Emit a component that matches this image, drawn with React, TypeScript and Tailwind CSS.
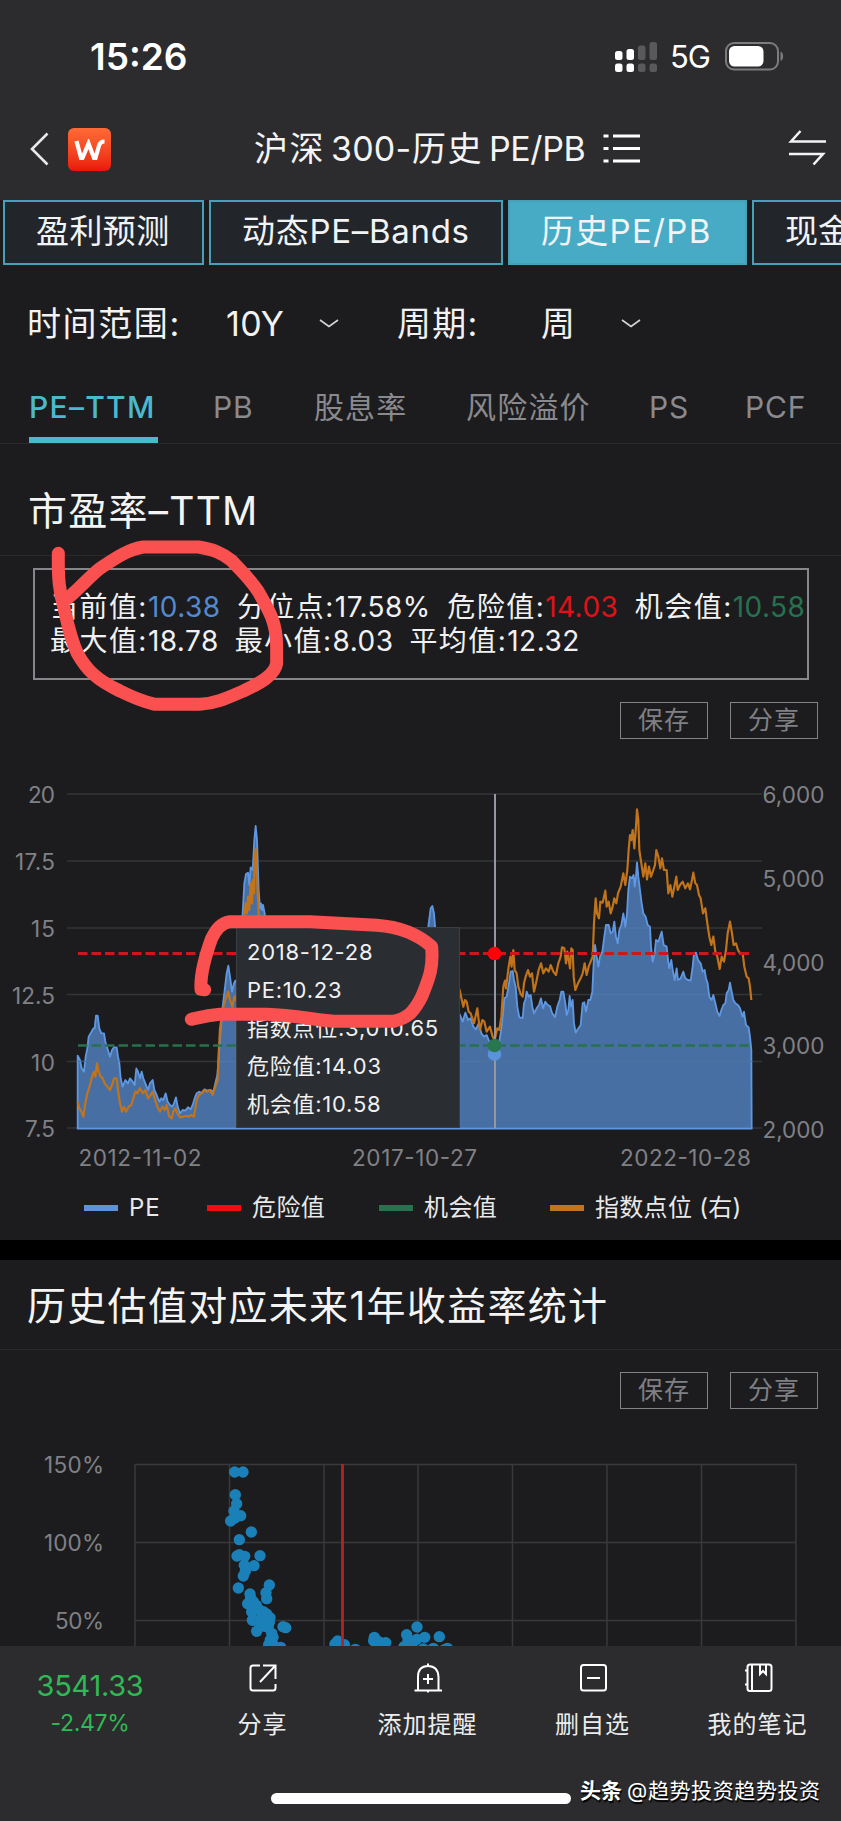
import type { ReactNode } from 'react';

const periodTabs = [
  { label: '盈利预测', className: 'w-[201px] bg-[#22262b] tracking-[0.4px]' },
  { label: '动态PE–Bands', className: 'w-[294px] bg-[#22262b] tracking-[0.7px]' },
  { label: '历史PE/PB', className: 'w-[239px] bg-[#47abc6] tracking-[1.300px]' },
  { label: '现金流', className: 'w-[200px] bg-[#22262b]' },
];

const metricTabs = [
  { label: 'PE–TTM', className: 'ml-[29px] w-[129px] text-[#4bb9cd] font-medium tracking-[1.300px]' },
  { label: 'PB', className: 'ml-[55px] w-[101px] text-[#8a8a8e] tracking-[0.8px]' },
  { label: '股息率', className: 'w-[152px] text-[#8a8a8e] tracking-[1.100px]' },
  { label: '风险溢价', className: 'w-[183px] text-[#8a8a8e] tracking-[1.200px]' },
  { label: 'PS', className: 'w-[96px] text-[#8a8a8e] tracking-[0.8px]' },
  { label: 'PCF', className: 'text-[#8a8a8e] tracking-[0.9px]' },
];

// chart series are kept in a 3x grid, drawn inside a scale(1/3) group
const PE_EARLY =
  '233,1076 233,857 240,870 245,895 252,905 257,860 262,835 266,800 272,790 280,775 284,775 288,737 293,737 298,775 304,790 312,790 316,815 322,835 330,860 336,840 342,832 350,832 354,860 358,880 362,925 368,950 376,930 384,940 390,925 398,935 404,945 409,895 414,905 420,925 425,905 430,925 436,940 444,960 450,940 458,930 463,960 470,975 478,995 484,985 490,990 497,970 503,995 510,1005 517,1010 522,1000 528,982 533,1010 540,1030 548,1020 556,1022 564,1012 572,1018 578,1005 584,985 590,970 598,965 606,970 614,958 622,962 632,960 640,965 646,940 652,915 657,850 662,780 668,710 674,660 680,610 685,587 690,620 696,665 702,640 706,632 712,640 722,560 728,430 733,340 738,312 744,308 748,345 752,292 758,300 763,210 767,168 771,210 776,360 780,415 783,400 786,420 789,405 794,430 800,480 830,700 1000,800 1200,700 1270,520 1285,470 1292,415 1297,408 1302,430 1306,480 1330,650 1380,735 1388,755 1396,728 1404,750 1412,745 1420,770 1428,778 1436,760 1444,790 1452,800 1460,795 1468,815 1476,820';
const PE_LATE =
  '104,860 115,830 122,790 128,740 133,685 140,680 147,640 152,605 158,603 162,630 167,650 172,710 178,742 188,744 192,700 196,690 200,665 206,680 212,675 217,710 222,730 230,715 237,705 243,685 249,715 256,695 263,705 270,708 276,728 285,742 292,710 299,690 304,665 310,665 316,700 320,735 325,720 329,678 333,710 338,690 342,760 347,788 353,778 362,765 368,700 373,697 378,725 385,690 391,690 397,665 401,580 405,525 410,560 415,590 420,560 427,545 433,500 438,465 446,465 452,490 458,485 463,455 468,500 473,520 478,480 484,465 490,430 496,470 501,430 505,360 510,320 516,325 521,315 524,350 528,320 531,277 535,320 540,360 545,400 550,430 557,440 563,465 570,470 573,530 578,575 584,550 588,510 595,515 600,500 605,485 611,525 620,530 624,570 628,595 634,570 638,600 644,630 650,595 654,630 662,625 670,605 676,625 684,630 692,632 698,590 702,550 708,548 714,570 722,580 728,605 734,600 738,625 743,640 748,680 755,690 760,675 766,700 772,725 779,738 784,720 790,705 796,700 800,670 806,660 810,638 815,665 820,690 826,700 834,705 840,715 848,740 852,725 858,765 866,772 870,800 874,840 875,1076';
const INDEX_EARLY =
  '233,995 238,1015 244,1025 250,1040 256,1000 262,970 270,945 276,920 282,905 286,920 291,880 296,905 302,920 308,925 314,940 322,950 330,960 336,945 342,925 350,925 354,960 360,1000 366,1025 372,1010 378,1025 386,1010 394,1005 400,985 406,965 412,970 420,955 428,970 436,960 444,985 452,975 458,965 464,985 472,1010 480,1025 487,1010 494,1020 500,1005 508,1040 515,1045 520,1025 526,1015 532,1030 540,1042 550,1040 558,1038 566,1040 574,1035 582,1040 590,990 597,975 604,970 612,960 620,965 630,960 638,975 646,950 653,930 656,850 660,775 668,720 676,690 684,665 690,690 697,710 703,680 708,690 715,640 725,520 732,450 737,400 741,430 744,380 748,420 752,340 756,400 759,330 762,370 764,270 767,237 770,300 776,430 780,450 800,520 1000,800 1370,630 1380,665 1390,710 1395,690 1400,695 1406,725 1412,730 1422,760 1432,715 1436,750 1440,780 1447,750 1453,755 1460,785 1470,770 1478,800';
const INDEX_LATE =
  '104,810 112,775 118,780 124,740 130,650 135,632 138,655 146,590 151,560 155,590 160,540 164,600 170,610 175,650 182,672 188,680 192,640 197,620 204,600 210,620 216,610 222,665 228,640 236,600 243,580 250,610 258,595 266,605 272,585 280,605 288,615 295,580 302,560 306,532 313,535 318,580 322,545 330,595 334,535 338,540 341,620 346,660 354,640 362,625 368,610 374,580 380,615 386,590 392,575 398,560 402,460 407,385 411,430 417,445 421,395 428,398 436,362 440,410 446,395 452,430 458,410 463,385 469,400 474,370 482,350 490,310 496,345 502,300 506,240 510,195 514,210 518,180 523,235 528,170 531,118 535,150 538,240 544,280 550,320 556,280 561,328 567,290 573,320 580,300 585,285 589,240 595,260 601,295 606,265 612,300 620,300 625,370 631,345 637,380 643,350 649,320 653,360 660,345 668,335 676,355 684,340 690,358 696,330 700,308 706,340 711,345 717,375 722,385 729,430 736,415 742,460 748,500 754,525 760,500 766,545 772,560 779,597 785,560 792,575 798,540 803,490 810,455 816,490 821,525 828,520 834,540 840,550 848,550 853,590 860,620 866,625 870,650 874,690';

const shiftX = (points: string, dx: number) =>
  points
    .split(' ')
    .map((p) => {
      const [x, y] = p.split(',').map(Number);
      return `${x + dx},${y}`;
    })
    .join(' ');

const pePoints = `${PE_EARLY} ${shiftX(PE_LATE, 1380)}`;
const indexPoints = `${INDEX_EARLY} ${shiftX(INDEX_LATE, 1380)}`;

const leftAxis = [
  { label: '20', y: 24, w: 27 },
  { label: '17.5', y: 91, w: 40 },
  { label: '15', y: 158, w: 24 },
  { label: '12.5', y: 224.5, w: 43 },
  { label: '10', y: 291.5, w: 24 },
  { label: '7.5', y: 358, w: 30 },
];

const rightAxis = [
  { label: '6,000', y: 24 },
  { label: '5,000', y: 108 },
  { label: '4,000', y: 191.5 },
  { label: '3,000', y: 275 },
  { label: '2,000', y: 358.5 },
];

const dots = [
  [704, 126], [729, 126], [706, 194], [710, 221], [702, 243], [722, 257], [705, 264], [692, 273],
  [754, 306], [718, 329], [718, 374], [711, 378], [734, 379], [780, 377], [733, 406], [762, 407],
  [736, 424], [730, 438], [715, 474], [808, 465], [798, 488], [800, 506], [750, 492], [752, 505],
  [743, 521], [760, 515], [769, 526], [755, 545], [775, 537], [790, 545], [800, 552], [785, 560],
  [810, 563], [757, 571], [776, 577], [793, 577], [808, 577], [797, 590], [805, 588], [770, 604],
  [849, 590], [857, 593], [815, 610], [819, 622], [811, 630], [817, 640], [806, 644], [842, 652],
  [1005, 642], [1013, 633], [1020, 648], [1033, 644], [1066, 658], [1123, 622], [1121, 632],
  [1138, 636], [1157, 638], [1145, 648], [1251, 591], [1220, 614], [1274, 622], [1250, 628],
  [1224, 632], [1236, 640], [1212, 650], [1270, 657], [1300, 655], [1318, 620], [1342, 655],
  [1332, 660],
];

function ActionButtons() {
  return (
    <div className="flex justify-end gap-[22px] pr-[23px] text-[25px] tracking-[1px] text-[#7f8084]">
      {['保存', '分享'].map((label) => (
        <button
          key={label}
          type="button"
          className="flex h-[37px] w-[88px] items-center justify-center border border-[#818387] leading-none"
        >
          {label}
        </button>
      ))}
    </div>
  );
}

function StatusBar() {
  return (
    <div className="flex h-[113px] items-center bg-[#2c2c2e] pl-[90px] text-white">
      <span className="w-[525px] pb-px text-[37px] font-semibold leading-none">15:26</span>
      <svg width="42" height="30" viewBox="0 0 42 30">
        <g fill="#fff">
          <rect x="0" y="9" width="7.5" height="9" rx="2.5" />
          <rect x="11.5" y="7" width="7.5" height="11" rx="2.5" />
          <rect x="0" y="21.5" width="7.5" height="8.5" rx="2.5" />
          <rect x="11.5" y="21.5" width="7.5" height="8.5" rx="2.5" />
        </g>
        <g fill="#59595b">
          <rect x="23" y="3.500" width="7.5" height="14.500" rx="2.5" />
          <rect x="34.500" y="0" width="7.5" height="18" rx="2.5" />
          <rect x="23" y="21.5" width="7.5" height="8.5" rx="2.5" />
          <rect x="34.500" y="21.5" width="7.5" height="8.5" rx="2.5" />
        </g>
      </svg>
      <span className="ml-[13px] w-[54px] text-[31px] leading-none tracking-[-1px]">5G</span>
      <svg className="ml-px" width="60" height="29" viewBox="0 0 60 29" fill="none">
        <rect x="1" y="1" width="52" height="26.500" rx="8" stroke="#7c7c7e" strokeWidth="2" />
        <rect x="4" y="4" width="34.500" height="20.500" rx="5.500" fill="#fff" />
        <path d="M55.500 9.500c3.500 1.200 3.500 8.300 0 9.500z" fill="#7c7c7e" />
      </svg>
    </div>
  );
}

function Header() {
  return (
    <header className="flex h-[87px] items-start bg-[#2c2c2e] pl-[29px] text-[#f4f4f5]">
      <svg className="mt-[19px]" width="20" height="34" viewBox="0 0 20 34" fill="none" stroke="#e8e8e8" strokeWidth="2.600">
        <path d="M18.500 1.500 3 17l15.500 15.500" />
      </svg>
      <div className="ml-[19px] mt-[15px] flex h-[43px] w-[43px] items-center justify-center rounded-[6px] bg-linear-to-b from-[#ff6a35] to-[#ea130a]">
        <svg width="31" height="22" viewBox="0 0 31 22" fill="none" stroke="#fff" strokeWidth="4.200">
          <path d="M2.500 2l4.500 17h1.500L14.500 4.500l5.500 14.500h1.500L25 6.500q1-4 5.500-4" />
        </svg>
      </div>
      <h1 className="ml-[143px] mt-[16px] flex w-[336px] text-[34px] leading-[40px]">
        <span className="w-[77px] tracking-[1.500px]">沪深</span>
        <span className="w-[81px] tracking-[0.2px]">300-</span>
        <span className="w-[77px] tracking-[1.500px]">历史</span>
        <span className="tracking-[-0.4px]">PE/PB</span>
      </h1>
      <svg className="ml-[13px] mt-[20px]" width="38" height="31" viewBox="0 0 38 31" stroke="#fff" strokeWidth="2.800">
        <path d="M.500 3h5M.500 15.500h5M.500 28h5M10 3h27M10 15.500h27M10 28h27" />
      </svg>
      <svg className="ml-[147px] mt-[17px]" width="38" height="36" viewBox="0 0 38 36" fill="none" stroke="#f4f4f5" strokeWidth="2.500">
        <path d="M12.500 1 3 11.500h35M1 24h34l-9.500 10.500" />
      </svg>
    </header>
  );
}

function Filters() {
  const chevron = (
    <svg width="20" height="9" viewBox="0 0 20 9" fill="none" stroke="#d5d5d5" strokeWidth="1.600">
      <path d="M1 1l9 6.500L19 1" />
    </svg>
  );

  return (
    <div className="flex h-[117px] items-center pl-[27px] text-[34px] leading-none text-[#f2f2f3]">
      <span className="w-[199px] tracking-[1.600px]">时间范围:</span>
      <span className="w-[93px] tracking-[0.3px]">10Y</span>
      {chevron}
      <span className="ml-[58px] w-[144px] tracking-[1.200px]">周期:</span>
      <span className="w-[80px]">周</span>
      {chevron}
    </div>
  );
}

function MetricTabs() {
  return (
    <nav className="flex h-[62px] whitespace-nowrap border-b border-[#29292c] text-[30px] leading-[50px]">
      {metricTabs.map((tab, i) => (
        <div key={tab.label} className={`relative h-[61px] ${tab.className}`}>
          {tab.label}
          {i === 0 && <span className="absolute bottom-0 left-0 h-[6px] w-[129px] bg-[#4bb9cd]" />}
        </div>
      ))}
    </nav>
  );
}

function Stat({ label, value, color = 'text-[#f1f1f2]' }: { label: string; value: string; color?: string }) {
  return (
    <span>
      <span className="tracking-[1.450px]">{label}:</span>
      <span className={`tracking-[0.45px] ${color}`}>{value}</span>
    </span>
  );
}

function Summary() {
  return (
    <div className="ml-[33px] mt-[12px] flex h-[112px] w-[776px] flex-col justify-center whitespace-nowrap border-2 border-[#85878b] pl-[15px] text-[28px] leading-[34px] text-[#f1f1f2]">
      <div className="flex gap-[16.500px]">
        <Stat label="当前值" value="10.38" color="text-[#5389ce]" />
        <Stat label="分位点" value="17.58%" />
        <Stat label="危险值" value="14.03" color="text-[#e01217]" />
        <Stat label="机会值" value="10.58" color="text-[#27714f]" />
      </div>
      <div className="flex gap-[16px]">
        <Stat label="最大值" value="18.78" />
        <Stat label="最小值" value="8.03" />
        <Stat label="平均值" value="12.32" />
      </div>
    </div>
  );
}

function ValuationChart() {
  return (
    <div className="relative mt-[31px] h-[405px]">
      <svg width="841" height="405" viewBox="0 0 841 405" className="block">
        <g stroke="#323436" strokeWidth="1.500">
          {leftAxis.map((t) => (
            <line key={t.label} x1="67" x2="762" y1={t.y} y2={t.y} />
          ))}
        </g>
        <g transform="scale(0.33333)" strokeLinejoin="round">
          <polygon points={pePoints} fill="#5588cb" fillOpacity="0.77" stroke="#5f97e0" strokeWidth="5.500" />
          <g stroke="#4a6f9a" strokeWidth="3" strokeOpacity="0.8">
            <path d="M362 874H233M1440 874H2256M676 673H700M1530 673H1545" />
          </g>
          <polyline points={indexPoints} fill="none" stroke="#c1741b" strokeWidth="6.500" />
        </g>
        <path d="M78 183.500H752" stroke="#cc181c" strokeWidth="2.800" strokeDasharray="9.500 4" />
        <path d="M78 275.500H752" stroke="#27714f" strokeWidth="2.500" strokeDasharray="9.500 4" />
        <path d="M495 24V358" stroke="#9496a0" strokeWidth="2" />
        <circle cx="494.500" cy="284" r="6.800" fill="#5b93da" />
        <circle cx="494.500" cy="275.500" r="6.800" fill="#27784f" />
        <circle cx="494.500" cy="183.500" r="6.800" fill="#fb0309" />
        <g fill="#808186" fontFamily="Inter, sans-serif" fontSize="22.500">
          {leftAxis.map((t) => (
            <text key={t.label} x={55 - t.w} y={t.y + 9} textLength={t.w}>
              {t.label}
            </text>
          ))}
          {rightAxis.map((t) => (
            <text key={t.label} x="762.500" y={t.y + 9} textLength="62">
              {t.label}
            </text>
          ))}
          <text x="78.500" y="396" textLength="123">2012-11-02</text>
          <text x="352" y="396" textLength="125">2017-10-27</text>
          <text x="620" y="396" textLength="131">2022-10-28</text>
        </g>
      </svg>

      <div className="absolute left-[236px] top-[157px] flex h-[201px] w-[224px] flex-col whitespace-nowrap border border-[#3b3e42] bg-[#2a2d31] pl-[10px] pt-[5px] text-[22px] leading-[38px] tracking-[0.75px] text-[#f1f1f2]">
        <span>2018-12-28</span>
        <span>PE:10.23</span>
        <span>指数点位:3,010.65</span>
        <span>危险值:14.03</span>
        <span>机会值:10.58</span>
      </div>
    </div>
  );
}

function LegendItem({ swatch, className, children }: { swatch: string; className: string; children: ReactNode }) {
  return (
    <div className={`flex items-center ${className}`}>
      <span className={`mr-[11px] h-[6px] w-[34px] ${swatch}`} />
      {children}
    </div>
  );
}

function Legend() {
  return (
    <div className="flex h-[65px] items-center whitespace-nowrap pl-[84px] text-[24px] leading-none text-[#e9e9ea]">
      <LegendItem swatch="bg-[#5f93d8]" className="w-[123px] tracking-[0.8px]">PE</LegendItem>
      <LegendItem swatch="bg-[#f00c10]" className="w-[172px] tracking-[0.4px]">危险值</LegendItem>
      <LegendItem swatch="bg-[#27714f]" className="w-[171px] tracking-[0.4px]">机会值</LegendItem>
      <LegendItem swatch="bg-[#c1741b]" className="w-[200px] tracking-[0.3px]">指数点位 (右)</LegendItem>
    </div>
  );
}

function ReturnScatter() {
  return (
    <svg width="841" height="216" viewBox="0 1430 841 216" className="mt-[21px] block">
      <g stroke="#38393b" strokeWidth="1.500" fill="none">
        <path d="M134.500 1464.500H796M134.500 1542.500H796M134.500 1620.500H796" />
        <path d="M135 1464V1650M229.500 1464V1650M324 1464V1650M418 1464V1650M512.500 1464V1650M607 1464V1650M701.500 1464V1650M796 1464V1650" />
      </g>
      <g fill="#1b80b8">
        {dots.map(([x, y]) => (
          <circle key={`${x}-${y}`} cx={x / 3} cy={1430 + y / 3} r="5.700" />
        ))}
      </g>
      <path d="M342.500 1464V1650" stroke="#b32424" strokeWidth="2.800" />
      <g fill="#808186" fontFamily="Inter, sans-serif" fontSize="22.500">
        <text x="44" y="1473" textLength="60">150%</text>
        <text x="44" y="1551" textLength="60">100%</text>
        <text x="55" y="1629" textLength="49">50%</text>
      </g>
    </svg>
  );
}

function BottomAction({ label, icon }: { label: string; icon: ReactNode }) {
  return (
    <button type="button" className="flex w-[165px] flex-col items-center whitespace-nowrap text-[24px] leading-[30px] tracking-[1px] text-[#ececed]">
      <svg width="32" height="32" viewBox="0 0 32 32" fill="none" stroke="#fff" strokeWidth="2" className="mb-[16px]">
        {icon}
      </svg>
      {label}
    </button>
  );
}

function BottomBar() {
  return (
    <footer className="h-[175px] bg-[#2c2c2e]">
      <div className="flex h-[134px] pt-[16px]">
        <div className="flex w-[180px] flex-col items-center pt-[7px] text-[#30b954]">
          <span className="text-[29px] leading-[34px] tracking-[-0.3px]">3541.33</span>
          <span className="mt-[6px] text-[23px] leading-[28px] tracking-[-0.3px]">-2.47%</span>
        </div>
        <BottomAction
          label="分享"
          icon={<path d="M13 3.500H6Q3.500 3.500 3.500 6V26Q3.500 28.500 6 28.500H26Q28.500 28.500 28.500 26V22M16 3.500H28.500V17M28 4 13 20" />}
        />
        <BottomAction
          label="添加提醒"
          icon={<path d="M2.500 28.500H30M6 28V15Q6 4 16 4T26.500 15V28M16 1.500V4M16 28V30.500M16 12V22M11 17H21" />}
        />
        <BottomAction
          label="删自选"
          icon={
            <>
              <rect x="4" y="3" width="25" height="25.500" rx="2.500" />
              <path d="M10 16H23" />
            </>
          }
        />
        <BottomAction
          label="我的笔记"
          icon={
            <>
              <rect x="5.500" y="2.500" width="24" height="26.500" rx="2.500" />
              <path d="M10 3V29M3 8.500H6M3 22.500H6M18 3V12L21 9L24 12V3" />
            </>
          }
        />
      </div>
      <div className="flex items-start">
        <div className="ml-[271px] mt-[13px] h-[11px] w-[300px] rounded-full bg-white" />
        <p className="ml-[9px] mt-[-4px] flex items-center whitespace-nowrap text-[21px] leading-[30px] text-white [text-shadow:1px_2px_1px_#000]">
          <span className="mr-[5px] font-bold">头条</span>
          <span className="tracking-[0.6px]">@趋势投资趋势投资</span>
        </p>
      </div>
    </footer>
  );
}

// hand drawn marker strokes over the current value and the tooltip
function MarkerStrokes() {
  return (
    <svg
      className="pointer-events-none absolute left-0 top-0"
      width="841"
      height="1240"
      viewBox="0 0 841 1240"
      fill="none"
      stroke="#fb5050"
      strokeLinecap="round"
      strokeLinejoin="round"
    >
      <g transform="translate(0 530) scale(0.33333)" strokeWidth="39">
        <path d="M175 70C174 150 178 180 190 225C205 290 210 320 232 370C260 420 290 450 360 483C400 503 430 515 465 523H600C650 520 690 500 730 483C780 460 825 435 830 400V345C828 270 805 240 775 185C745 140 720 120 695 92C665 68 640 58 595 51H430C385 58 350 82 300 115C270 138 250 165 203 205" />
      </g>
      <g transform="translate(200 790) scale(0.33333)" strokeWidth="39">
        <path d="M14 599L3 598C0 550 15 500 35 445C50 415 65 398 90 395H330L530 406C590 410 650 430 695 470C700 530 690 560 665 620C640 670 620 685 580 694H400C320 685 270 675 200 673H60C20 676 0 682 -26 688" />
      </g>
    </svg>
  );
}

export default function App() {
  return (
    <div className="relative h-[1821px] w-[841px] overflow-hidden bg-[#1c1c1e] font-[Inter,'Noto_Sans_CJK_SC',sans-serif]">
      <StatusBar />
      <Header />
      <nav className="flex h-[65px] gap-[5px] whitespace-nowrap pl-[3px] text-[33px] text-[#f1f3f4]">
        {periodTabs.map((tab) => (
          <div
            key={tab.label}
            className={`flex h-[65px] shrink-0 items-center border-2 border-[#47a0b8] pb-[3px] pl-[31px] leading-none ${tab.className}`}
          >
            {tab.label}
          </div>
        ))}
      </nav>
      <Filters />
      <MetricTabs />
      <h2 className="flex h-[112px] items-center border-b border-[#29292c] pl-[28px] pt-[22px] text-[39px] leading-none tracking-[1.200px] text-[#f4f4f5]">
        市盈率–TTM
      </h2>
      <Summary />
      <div className="mt-[22px]">
        <ActionButtons />
      </div>
      <ValuationChart />
      <Legend />
      <div className="h-[20px] bg-black" />
      <h2 className="flex h-[90px] items-center border-b border-[#29292c] pl-[27px] pt-[2px] text-[39px] leading-none tracking-[1.300px] text-[#f4f4f5]">
        历史估值对应未来1年收益率统计
      </h2>
      <div className="mt-[22px]">
        <ActionButtons />
      </div>
      <ReturnScatter />
      <BottomBar />
      <MarkerStrokes />
    </div>
  );
}
